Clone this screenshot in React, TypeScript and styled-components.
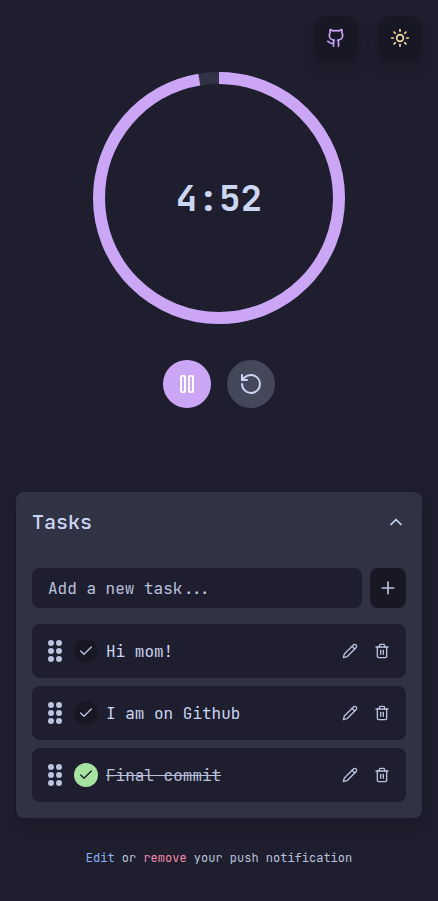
import React from 'react';
import styled, { createGlobalStyle } from 'styled-components';
import { RotateCcw, Sun, ChevronUp, Plus, Check, Trash2 } from 'lucide-react';

const GlobalStyle = createGlobalStyle`
  *, *::before, *::after { box-sizing: border-box; }
  body {
    margin: 0;
    background: #1e1e2e;
    color: #cdd6f4;
    font-family: 'JetBrains Mono', 'DejaVu Sans Mono', monospace;
    font-size: 16px;
    line-height: 24px;
  }
  button { border: 0; padding: 0; margin: 0; font: inherit; color: inherit; background: none; }
  svg { display: block; flex: none; }
`;

const softShadow = '0 8px 16px rgba(0, 0, 0, 0.1), 0 4px 6px -2px rgba(0, 0, 0, 0.05)';

const Page = styled.main`
  min-height: 901px;
  display: flex;
  flex-direction: column;
  padding: 16px 16px 0;
`;
const TopBar = styled.header`
  display: flex;
  justify-content: flex-end;
  gap: 20px;
  height: 56px;
`;
const TopButton = styled.button<{ $color: string }>`
  width: 44px;
  height: 44px;
  border-radius: 12px;
  display: grid;
  place-items: center;
  background: #181825;
  color: ${(p) => p.$color};
  box-shadow: ${softShadow};
`;
const Timer = styled.section`
  display: flex;
  flex-direction: column;
  align-items: center;
  gap: 36px;
  height: 420px;
`;
const Dial = styled.div`
  display: grid;
  place-items: center;
  width: 252px;
  height: 252px;
  & > * { grid-area: 1 / 1; }
`;
const Time = styled.span`
  font-size: 36px;
  line-height: 40px;
  font-weight: 700;
`;
const Controls = styled.div`
  display: flex;
  gap: 16px;
`;
const RoundButton = styled.button<{ $primary?: boolean }>`
  width: 48px;
  height: 48px;
  border-radius: 50%;
  display: grid;
  place-items: center;
  background: ${(p) => (p.$primary ? '#cba6f7' : '#45475a')};
  color: ${(p) => (p.$primary ? '#fff' : '#cdd6f4')};
`;
const Card = styled.section`
  height: 326px;
  padding: 16px;
  border-radius: 8px;
  background: #313244;
  box-shadow: ${softShadow};
`;
const CardHeader = styled.div`
  display: flex;
  justify-content: space-between;
  align-items: center;
  height: 28px;
  margin-bottom: 32px;
`;
const Title = styled.h2`
  margin: 0;
  font-size: 20px;
  line-height: 28px;
  font-weight: 500;
`;
const AddRow = styled.form`
  display: flex;
  gap: 8px;
  margin-bottom: 16px;
`;
const Input = styled.input`
  flex: 1;
  min-width: 0;
  height: 40px;
  border: 0;
  border-radius: 8px;
  padding: 0 16px;
  background: #1e1e2e;
  color: #cdd6f4;
  font: inherit;
  &::placeholder { color: #bac2de; opacity: 1; }
`;
const AddButton = styled.button`
  width: 36px;
  height: 40px;
  border-radius: 8px;
  display: grid;
  place-items: center;
  background: #181825;
  color: #bac2de;
`;
const List = styled.ul`
  list-style: none;
  margin: 0;
  padding: 0;
  display: grid;
  gap: 8px;
`;
const Item = styled.li`
  height: 54px;
  padding: 0 16px;
  border-radius: 8px;
  display: flex;
  align-items: center;
  background: #1e1e2e;
  color: #bac2de;
`;
const Toggle = styled.button<{ $done: boolean }>`
  width: 24px;
  height: 24px;
  margin: 0 8px 0 12px;
  border-radius: 50%;
  display: grid;
  place-items: center;
  background: ${(p) => (p.$done ? '#a6e3a1' : '#181825')};
  color: ${(p) => (p.$done ? '#1e1e2e' : '#bac2de')};
`;
const Label = styled.span<{ $done: boolean }>`
  flex: 1;
  padding-top: 2px;
  color: ${(p) => (p.$done ? '#bac2de' : '#cdd6f4')};
  text-decoration: ${(p) => (p.$done ? 'line-through' : 'none')};
`;
const Actions = styled.div`
  display: flex;
  gap: 16px;
`;
const Footer = styled.footer`
  margin-top: 32px;
  text-align: center;
  font-size: 12px;
  line-height: 16px;
  color: #bac2de;
`;
const Link = styled.span<{ $color: string }>`
  color: ${(p) => p.$color};
`;

const GithubIcon = () => (
  <svg width="20" height="20" viewBox="0 0 24 24" fill="none" stroke="currentColor" strokeWidth="2" strokeLinecap="round" strokeLinejoin="round">
    <path d="M15 22v-4a4.8 4.8 0 0 0-1-3.5c3 0 6-2 6-5.5.08-1.25-.27-2.48-1-3.5.28-1.15.28-2.35 0-3.5 0 0-1 0-3 1.5-2.64-.5-5.36-.5-8 0C6 2 5 2 5 2c-.3 1.15-.3 2.35 0 3.5A5.4 5.4 0 0 0 4 9c0 3.5 3 5.5 6 5.5-.39.49-.68 1.05-.85 1.65-.17.6-.22 1.23-.15 1.85v4" />
    <path d="M9 18c-4.51 2-5-2-7-2" />
  </svg>
);
const PauseIcon = () => (
  <svg width="24" height="24" viewBox="0 0 24 24" fill="none" stroke="currentColor" strokeWidth="2" strokeLinejoin="round">
    <rect x="6" y="4" width="4" height="16" rx="1" />
    <rect x="14" y="4" width="4" height="16" rx="1" />
  </svg>
);
const PencilIcon = () => (
  <svg width="16" height="16" viewBox="0 0 24 24" fill="none" stroke="currentColor" strokeWidth="2" strokeLinecap="round" strokeLinejoin="round">
    <path d="M17 3a2.85 2.83 0 1 1 4 4L7.5 20.5 2 22l1.5-5.5Z" />
    <path d="m15 5 4 4" />
  </svg>
);
const GripIcon = () => (
  <svg width="14" height="22" viewBox="0 0 14 22" fill="currentColor">
    {[3, 11, 19].map((y) => (
      <React.Fragment key={y}>
        <circle cx="3" cy={y} r="3" />
        <circle cx="11" cy={y} r="3" />
      </React.Fragment>
    ))}
  </svg>
);

const total = 300;
const remaining = 292;
const circumference = 2 * Math.PI * 120;
const ProgressRing = () => (
  <svg width="252" height="252" viewBox="0 0 252 252" fill="none" strokeWidth="12">
    <circle cx="126" cy="126" r="120" stroke="#313244" />
    <circle
      cx="126"
      cy="126"
      r="120"
      stroke="#cba6f7"
      strokeDasharray={`${(circumference * remaining) / total} ${circumference}`}
      transform="rotate(-90 126 126)"
    />
  </svg>
);

const tasks = [
  { text: 'Hi mom!', done: false },
  { text: 'I am on Github', done: false },
  { text: 'Final commit', done: true },
];

export default function App() {
  return (
    <>
      <GlobalStyle />
      <Page>
        <TopBar>
          <TopButton $color="#cba6f7" aria-label="GitHub"><GithubIcon /></TopButton>
          <TopButton $color="#f9e2af" aria-label="Theme"><Sun size={20} /></TopButton>
        </TopBar>
        <Timer>
          <Dial>
            <ProgressRing />
            <Time>4:52</Time>
          </Dial>
          <Controls>
            <RoundButton $primary aria-label="Pause"><PauseIcon /></RoundButton>
            <RoundButton aria-label="Reset"><RotateCcw size={24} /></RoundButton>
          </Controls>
        </Timer>
        <Card>
          <CardHeader>
            <Title>Tasks</Title>
            <ChevronUp size={20} />
          </CardHeader>
          <AddRow>
            <Input placeholder="Add a new task..." />
            <AddButton type="button" aria-label="Add"><Plus size={20} /></AddButton>
          </AddRow>
          <List>
            {tasks.map((task) => (
              <Item key={task.text}>
                <GripIcon />
                <Toggle $done={task.done} aria-label="Toggle"><Check size={16} /></Toggle>
                <Label $done={task.done}>{task.text}</Label>
                <Actions>
                  <PencilIcon />
                  <Trash2 size={16} />
                </Actions>
              </Item>
            ))}
          </List>
        </Card>
        <Footer>
          <Link $color="#89b4fa">Edit</Link> or <Link $color="#f38ba8">remove</Link> your push notification
        </Footer>
      </Page>
    </>
  );
}
